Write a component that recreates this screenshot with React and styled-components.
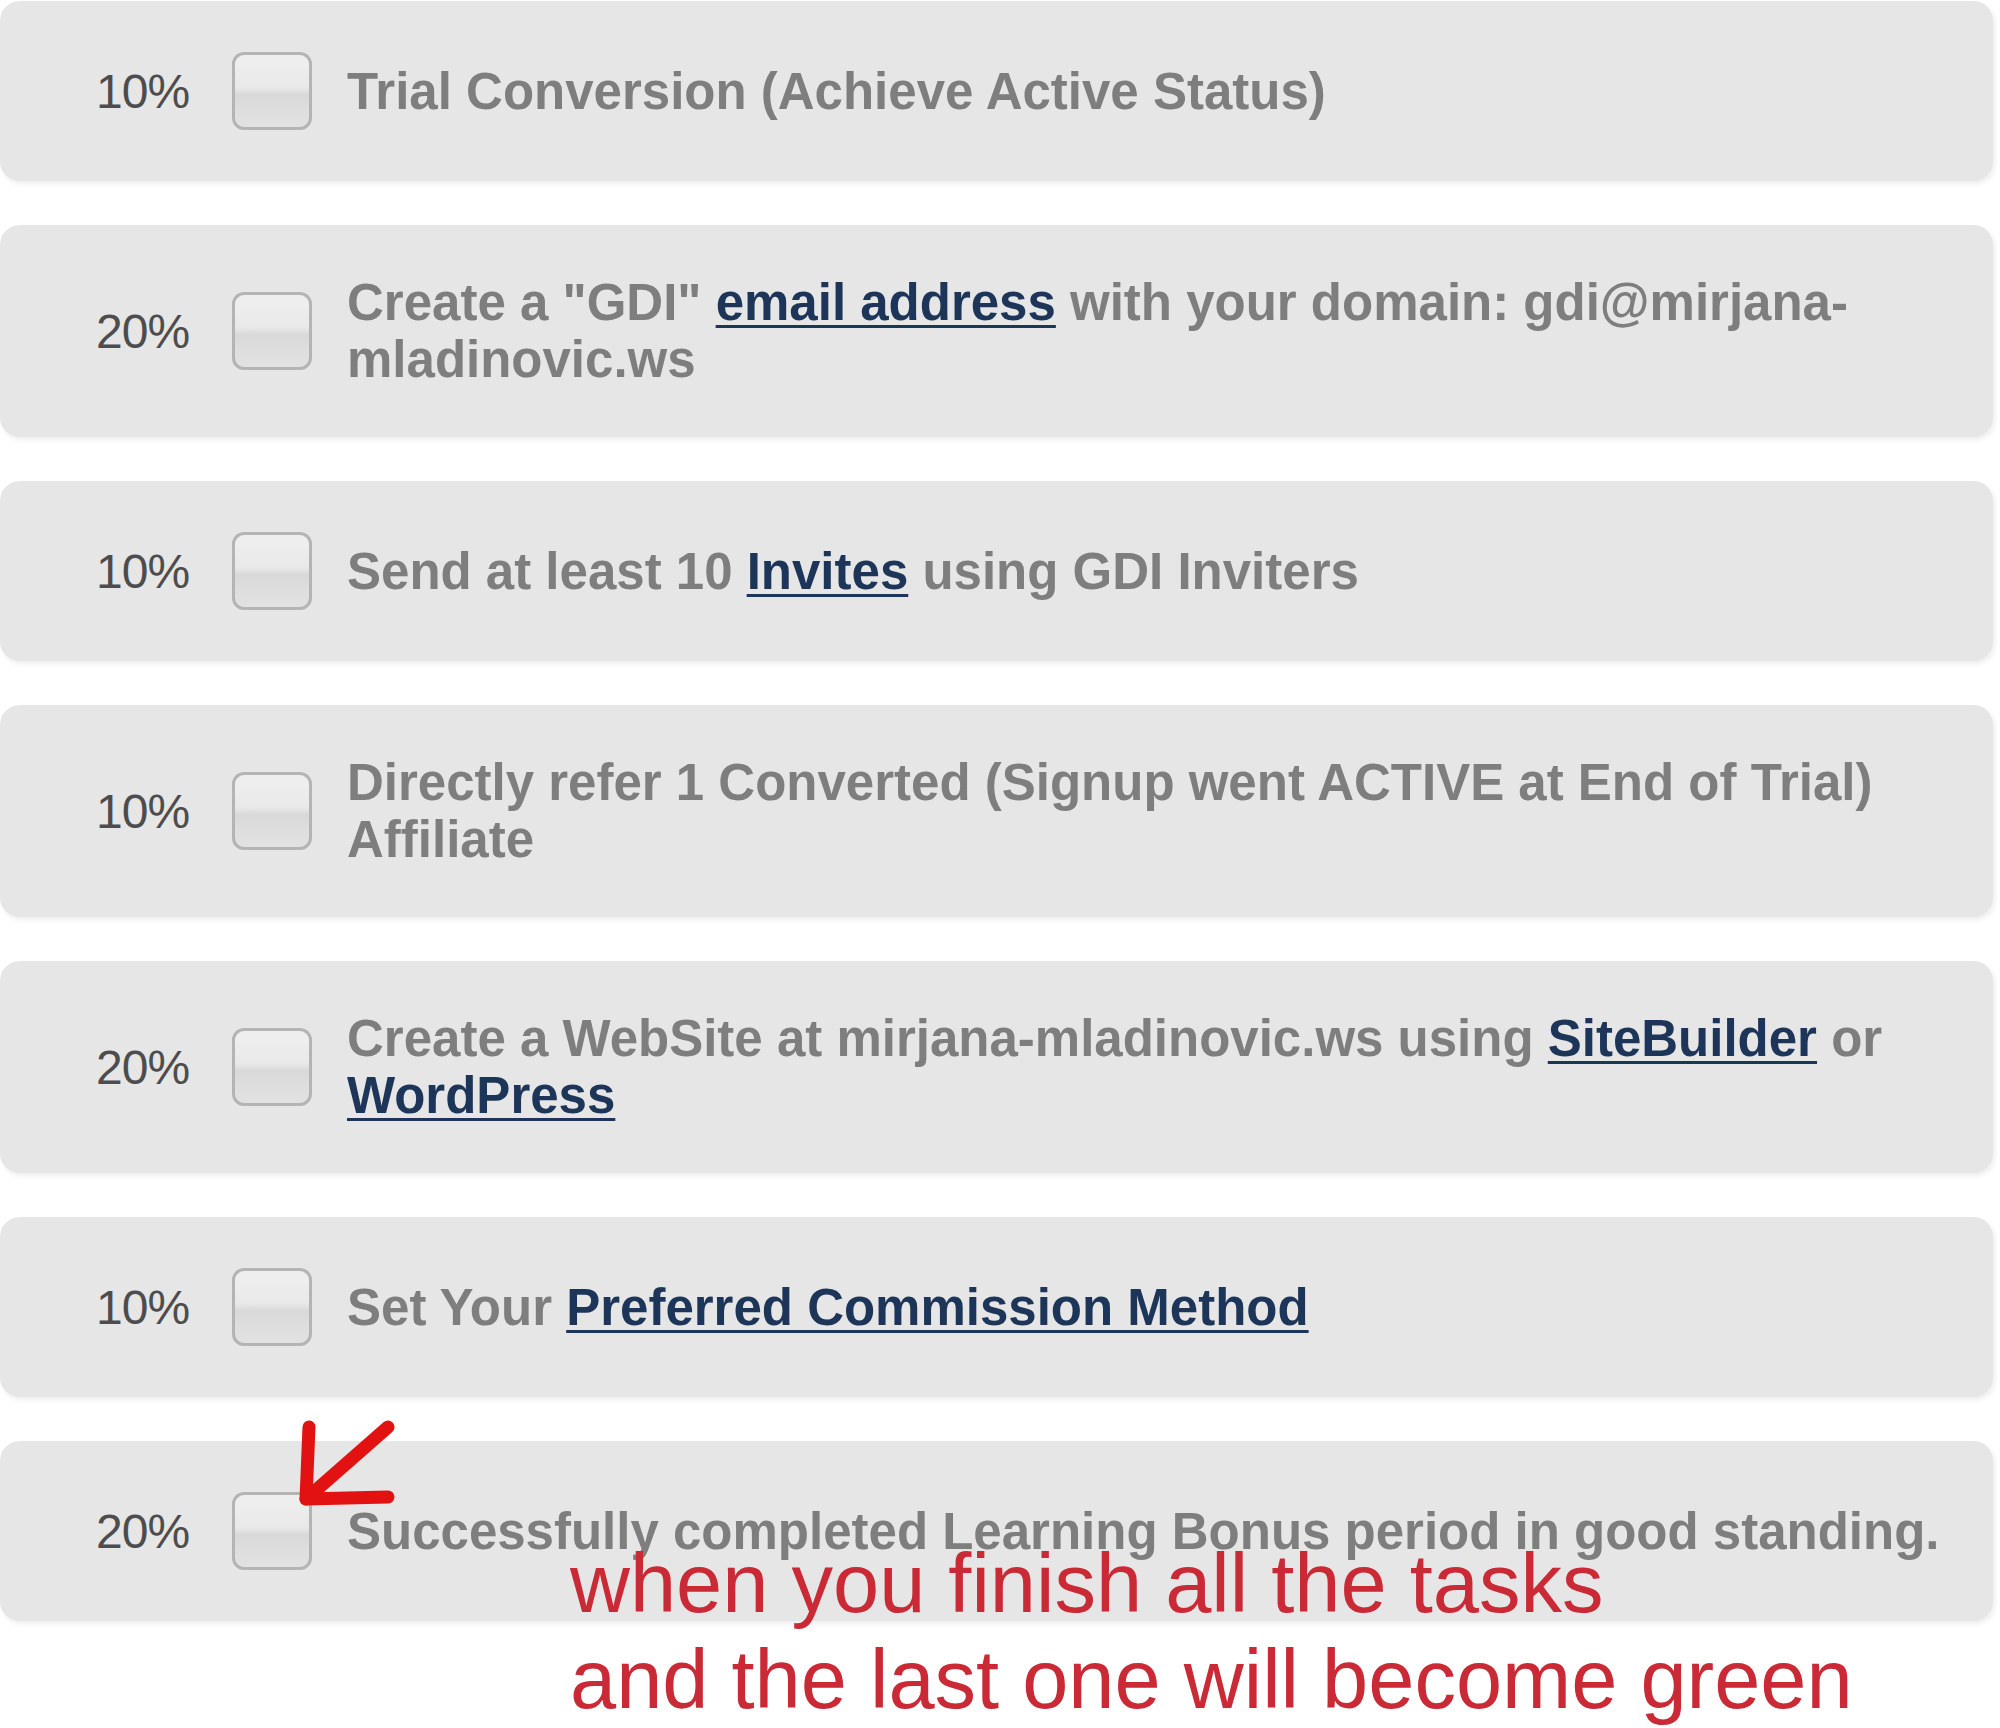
import React from "react";
import styled, { createGlobalStyle } from "styled-components";

const GlobalStyle = createGlobalStyle`
  body {
    margin: 0;
    background: #ffffff;
    font-family: "Liberation Sans", Arial, sans-serif;
  }
`;

const Page = styled.div`
  position: relative;
  width: 2000px;
  height: 1728px;
  display: flex;
  flex-direction: column;
  gap: 44px;
  padding-top: 1px;
  box-sizing: border-box;
  overflow: hidden;
`;

const TaskRow = styled.div`
  display: flex;
  align-items: center;
  width: 1993px;
  height: ${(p) => (p.$tall ? 212 : 180)}px;
  flex-shrink: 0;
  box-sizing: border-box;
  padding-left: 96px;
  background: #e6e6e6;
  border-radius: 20px;
  box-shadow: 2px 3px 5px rgba(0, 0, 0, 0.07);
`;

const Percent = styled.span`
  width: 136px;
  flex-shrink: 0;
  font-size: 48px;
  color: #4d4d4d;
  letter-spacing: -1px;
`;

const Check = styled.span`
  width: 74px;
  height: 72px;
  flex-shrink: 0;
  border: 3px solid #b4b4b4;
  border-radius: 12px;
  background: linear-gradient(
    to bottom,
    #efefef 0%,
    #e9e9e9 45%,
    #d9d9d9 55%,
    #e2e2e2 100%
  );
`;

const Label = styled.div`
  margin-left: 35px;
  font-size: 51px;
  font-weight: bold;
  line-height: 57px;
  color: #7e7e7e;
  white-space: nowrap;
`;

const Link = styled.a`
  color: #1c3558;
  text-decoration: underline;
  text-decoration-thickness: 3px;
  text-underline-offset: 5px;
`;

const Note = styled.div`
  position: absolute;
  left: 570px;
  top: 1536px;
  font-size: 83px;
  line-height: 96px;
  color: #c92a36;
  white-space: nowrap;
`;

const Arrow = styled.svg`
  position: absolute;
  left: 292px;
  top: 1415px;
`;

const tasks = [
  { pct: "10%", content: <>Trial Conversion (Achieve Active Status)</> },
  {
    pct: "20%",
    tall: true,
    content: (
      <>
        Create a "GDI" <Link href="#">email address</Link> with your domain:
        gdi@mirjana-
        <br />
        mladinovic.ws
      </>
    ),
  },
  {
    pct: "10%",
    content: (
      <>
        Send at least 10 <Link href="#">Invites</Link> using GDI Inviters
      </>
    ),
  },
  {
    pct: "10%",
    tall: true,
    content: (
      <>
        Directly refer 1 Converted (Signup went ACTIVE at End of Trial)
        <br />
        Affiliate
      </>
    ),
  },
  {
    pct: "20%",
    tall: true,
    content: (
      <>
        Create a WebSite at mirjana-mladinovic.ws using{" "}
        <Link href="#">SiteBuilder</Link> or
        <br />
        <Link href="#">WordPress</Link>
      </>
    ),
  },
  {
    pct: "10%",
    content: (
      <>
        Set Your <Link href="#">Preferred Commission Method</Link>
      </>
    ),
  },
  {
    pct: "20%",
    content: <>Successfully completed Learning Bonus period in good standing.</>,
  },
];

export default function App() {
  return (
    <>
      <GlobalStyle />
      <Page>
        {tasks.map((t, i) => (
          <TaskRow key={i} $tall={t.tall}>
            <Percent>{t.pct}</Percent>
            <Check />
            <Label>{t.content}</Label>
          </TaskRow>
        ))}
        <Arrow width="110" height="100" viewBox="0 0 110 100">
          <g
            stroke="#e31212"
            strokeWidth="13"
            strokeLinecap="round"
            strokeLinejoin="round"
            fill="none"
          >
            <path d="M96 12 L14 84" />
            <path d="M17 12 L14 84 L96 82" />
          </g>
        </Arrow>
        <Note>
          when you finish all the tasks
          <br />
          and the last one will become green
        </Note>
      </Page>
    </>
  );
}
